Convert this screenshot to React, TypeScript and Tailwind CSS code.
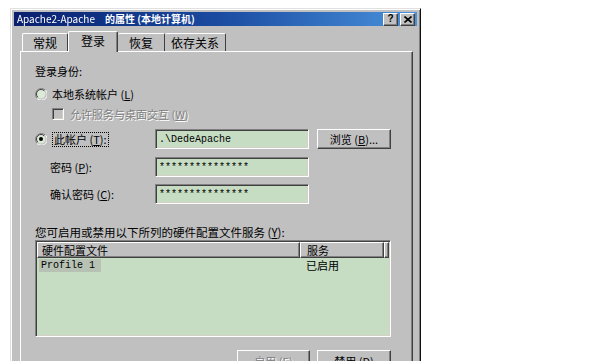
import React from "react";

const raised =
  "border border-t-white border-l-white border-r-[#404040] border-b-[#404040] shadow-[inset_-1px_-1px_0_#808080]";
const sunken =
  "border border-t-[#808080] border-l-[#808080] border-r-white border-b-white shadow-[inset_1px_1px_0_#404040,inset_-1px_-1px_0_#d4d0c8]";

function Radio({ checked }: { checked?: boolean }) {
  return (
    <svg width="12" height="12" viewBox="0 0 12 12" className="shrink-0">
      <path d="M10.5 2.2 A5.5 5.5 0 1 0 2.2 10.5" fill="none" stroke="#808080" strokeWidth="1" />
      <path d="M2.2 10.5 A5.5 5.5 0 0 0 10.5 2.2" fill="none" stroke="#ffffff" strokeWidth="1" />
      <circle cx="6" cy="6" r="4.5" fill="#dbe9d7" />
      <path d="M9.2 2.8 A4.5 4.5 0 1 0 2.8 9.2" fill="none" stroke="#404040" strokeWidth="1" />
      {checked && <circle cx="6" cy="6" r="2" fill="#000" />}
    </svg>
  );
}

function Field({ children }: { children?: React.ReactNode }) {
  return (
    <div
      className={`${sunken} w-[154px] h-[20px] bg-[#c6dcc3] flex items-center pl-[3px] font-['Liberation_Mono',monospace] text-[10px] text-black`}
    >
      {children}
    </div>
  );
}

export default function App() {
  return (
    <div className="w-[609px] h-[361px] bg-white overflow-hidden font-['Noto_Sans_CJK_SC',sans-serif] text-black">
      <div className="ml-[10px] mt-[8px] w-[411px] h-[360px] bg-[#c0c0c0] border border-t-[#e0e0e0] border-l-[#e0e0e0] border-r-[#101010] border-b-[#101010] shadow-[inset_1px_1px_0_#ffffff,inset_-1px_-1px_0_#808080] p-[3px]">
        {/* Title bar */}
        <div className="h-[14px] flex items-center bg-gradient-to-r from-[#0a1f6e] via-[#1a4aa0] to-[#4a92dc] pl-[3px] pr-[2px]">
          <span className="text-white text-[10px] leading-[14px] blur-[0.7px] w-[84px] mr-[4px] whitespace-nowrap">
            Apache2-Apache
          </span>
          <span className="text-white text-[10px] leading-[14px] font-bold whitespace-nowrap">
            的属性 (本地计算机)
          </span>
          <div className="ml-auto flex gap-[2px]">
            <div className={`${raised} w-[15px] h-[13px] bg-[#c0c0c0] flex items-center justify-center text-[10px] font-bold leading-none font-['Liberation_Sans',sans-serif]`}>
              ?
            </div>
            <div className={`${raised} w-[15px] h-[13px] bg-[#c0c0c0] flex items-center justify-center`}>
              <svg width="8" height="7" viewBox="0 0 8 7">
                <path d="M0.5 0.5 L7.5 6.5 M7.5 0.5 L0.5 6.5" stroke="#000" strokeWidth="1.6" />
              </svg>
            </div>
          </div>
        </div>

        {/* Tabs */}
        <div className="mt-[5px] ml-[8px] h-[21px] flex items-end relative z-10 -mb-px text-[12px]">
          <div className="w-[46px] h-[18px] mb-px border border-b-0 border-t-white border-l-white border-r-[#404040] rounded-t-[2px] flex items-center justify-center leading-none">
            常规
          </div>
          <div className="w-[50px] h-[21px] bg-[#c0c0c0] border border-b-0 border-t-white border-l-white border-r-[#404040] shadow-[inset_-1px_0_0_#808080] rounded-t-[2px] flex items-start justify-center pt-[2px] leading-[14px]">
            登录
          </div>
          <div className="w-[47px] h-[18px] mb-px border border-b-0 border-t-white border-l-0 border-r-[#404040] rounded-t-[2px] flex items-center justify-center leading-none">
            恢复
          </div>
          <div className="w-[61px] h-[18px] mb-px border border-b-0 border-t-white border-l-0 border-r-[#404040] rounded-t-[2px] flex items-center justify-center leading-none">
            依存关系
          </div>
        </div>

        {/* Panel */}
        <div className="ml-[6px] w-[393px] h-[320px] border border-t-white border-l-white border-r-[#404040] border-b-[#404040] shadow-[inset_-1px_0_0_#808080] pl-[14px] pr-[21px] pt-[12px] text-[11px]">
          <div className="h-[14px] leading-[14px]">登录身份:</div>

          <div className="mt-[9px] h-[14px] flex items-center">
            <Radio />
            <span className="ml-[5px] leading-[14px]">
              本地系统帐户 (<u>L</u>)
            </span>
          </div>

          <div className="mt-[6px] h-[14px] flex items-center pl-[17px]">
            <div className={`${sunken} w-[12px] h-[12px] bg-[#c0c0c0]`} />
            <span className="ml-[6px] leading-[14px] text-[#808080] [text-shadow:1px_1px_0_#ffffff]">
              允许服务与桌面交互 (<u>W</u>)
            </span>
          </div>

          <div className="mt-[8px] h-[20px] flex items-center">
            <div className="w-[120px] flex items-center">
              <Radio checked />
              <span className="ml-[5px] leading-[13px] border border-dotted border-black px-px">
                此帐户 (<u>T</u>):
              </span>
            </div>
            <Field>.\DedeApache</Field>
            <div className={`${raised} ml-[8px] w-[74px] h-[20px] flex items-center justify-center bg-[#c0c0c0]`}>
              浏览 (<u>B</u>)...
            </div>
          </div>

          <div className="mt-[8px] h-[20px] flex items-center">
            <div className="w-[120px] pl-[15px] leading-[14px]">
              密码 (<u>P</u>):
            </div>
            <Field>***************</Field>
          </div>

          <div className="mt-[7px] h-[20px] flex items-center">
            <div className="w-[120px] pl-[15px] leading-[14px]">
              确认密码 (<u>C</u>):
            </div>
            <Field>***************</Field>
          </div>

          <div className="mt-[21px] h-[14px] leading-[14px] text-[11.5px] whitespace-nowrap">
            您可启用或禁用以下所列的硬件配置文件服务 (<u>Y</u>):
          </div>

          <div className={`mt-[1px] h-[97px] bg-[#c6dcc3] ${sunken} p-px`}>
            <div className="flex h-[16px] text-[11px] leading-[14px]">
              <div className={`${raised} w-[263px] bg-[#c0c0c0] pl-[4px]`}>硬件配置文件</div>
              <div className={`${raised} w-[84px] bg-[#c0c0c0] pl-[6px]`}>服务</div>
              <div className={`${raised} flex-1 bg-[#c0c0c0]`} />
            </div>
            <div className="flex h-[13px] items-center mt-[1px]">
              <div className="ml-[2px] w-[62px] h-[13px] bg-[#b7c2b4] flex items-center pl-[2px] font-['Liberation_Mono',monospace] text-[10px]">
                Profile 1
              </div>
              <div className="ml-[205px] leading-[13px] text-[11px]">已启用</div>
            </div>
          </div>

          <div className="mt-[13px] flex justify-end gap-[7px]">
            <div className={`${raised} w-[73px] h-[23px] bg-[#c0c0c0] flex items-center justify-center text-[#808080] [text-shadow:1px_1px_0_#ffffff]`}>
              启用 (<u>E</u>)
            </div>
            <div className={`${raised} w-[74px] h-[23px] bg-[#c0c0c0] flex items-center justify-center`}>
              禁用 (<u>D</u>)
            </div>
          </div>
        </div>
      </div>
    </div>
  );
}
